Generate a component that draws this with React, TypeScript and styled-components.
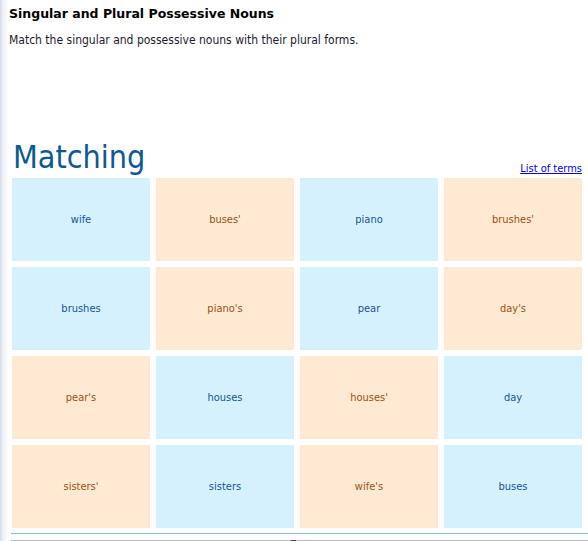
import React from "react";
import styled, { createGlobalStyle } from "styled-components";

const Global = createGlobalStyle`
  html, body { margin: 0; padding: 0; background: #fff; }
  body {
    font-family: "DejaVu Sans Condensed", "DejaVu Sans", sans-serif;
    background: linear-gradient(to right, #d3dbe9 0px, #eef1f7 3px, #ffffff 9px) no-repeat;
    min-height: 541px;
  }
`;

const Page = styled.div`
  width: 588px;
  height: 541px;
  overflow: hidden;
  box-sizing: border-box;
`;

const Header = styled.header`
  padding: 6px 0 0 9px;
  height: 136px;
  box-sizing: border-box;
`;

const Title = styled.h1`
  margin: 0;
  font-family: "DejaVu Sans", sans-serif;
  font-size: 12.5px;
  line-height: 16px;
  font-weight: bold;
  color: #000;
`;

const Intro = styled.p`
  margin: 11px 0 0;
  font-size: 12px;
  line-height: 14px;
  color: #1c1a2e;
`;

const Activity = styled.section`
  margin-left: 11px;
  width: 577px;
`;

const ActivityHead = styled.div`
  display: flex;
  justify-content: space-between;
  align-items: flex-end;
  padding: 0 6px 0 2px;
  height: 42px;
`;

const Heading = styled.h2`
  margin: 0 0 3px;
  font-size: 32px;
  line-height: 36px;
  font-weight: normal;
  color: #0f5896;
`;

const TermsLink = styled.a`
  font-size: 11px;
  line-height: 13px;
  color: #0000ee;
  text-decoration: underline;
  margin-bottom: 3px;
`;

const Grid = styled.div`
  display: grid;
  grid-template-columns: repeat(4, 138px);
  grid-auto-rows: 83px;
  gap: 6px;
  padding: 0 0 5px 1px;
  border-bottom: 1px solid #7fc3dc;
`;

const Card = styled.div<{ $tone: "blue" | "orange" }>`
  display: flex;
  align-items: center;
  justify-content: center;
  font-size: 11px;
  background: ${(p) => (p.$tone === "blue" ? "#d4f1fd" : "#feead3")};
  color: ${(p) => (p.$tone === "blue" ? "#17549a" : "#a44f12")};
`;

const BottomRule = styled.div`
  margin: 6px 0 0 11px;
  height: 2px;
  background: #a9b6c4;
  display: flex;
  justify-content: center;
`;

const RuleHandle = styled.span`
  width: 5px;
  height: 2px;
  background: #4a4a4a;
  margin-right: 12px;
`;

const cards: { text: string; tone: "blue" | "orange" }[] = [
  { text: "wife", tone: "blue" },
  { text: "buses'", tone: "orange" },
  { text: "piano", tone: "blue" },
  { text: "brushes'", tone: "orange" },
  { text: "brushes", tone: "blue" },
  { text: "piano's", tone: "orange" },
  { text: "pear", tone: "blue" },
  { text: "day's", tone: "orange" },
  { text: "pear's", tone: "orange" },
  { text: "houses", tone: "blue" },
  { text: "houses'", tone: "orange" },
  { text: "day", tone: "blue" },
  { text: "sisters'", tone: "orange" },
  { text: "sisters", tone: "blue" },
  { text: "wife's", tone: "orange" },
  { text: "buses", tone: "blue" },
];

export default function App() {
  return (
    <Page>
      <Global />
      <Header>
        <Title>Singular and Plural Possessive Nouns</Title>
        <Intro>Match the singular and possessive nouns with their plural forms.</Intro>
      </Header>
      <Activity>
        <ActivityHead>
          <Heading>Matching</Heading>
          <TermsLink href="#">List of terms</TermsLink>
        </ActivityHead>
        <Grid>
          {cards.map((c, i) => (
            <Card key={i} $tone={c.tone}>
              {c.text}
            </Card>
          ))}
        </Grid>
      </Activity>
      <BottomRule>
        <RuleHandle />
      </BottomRule>
    </Page>
  );
}
